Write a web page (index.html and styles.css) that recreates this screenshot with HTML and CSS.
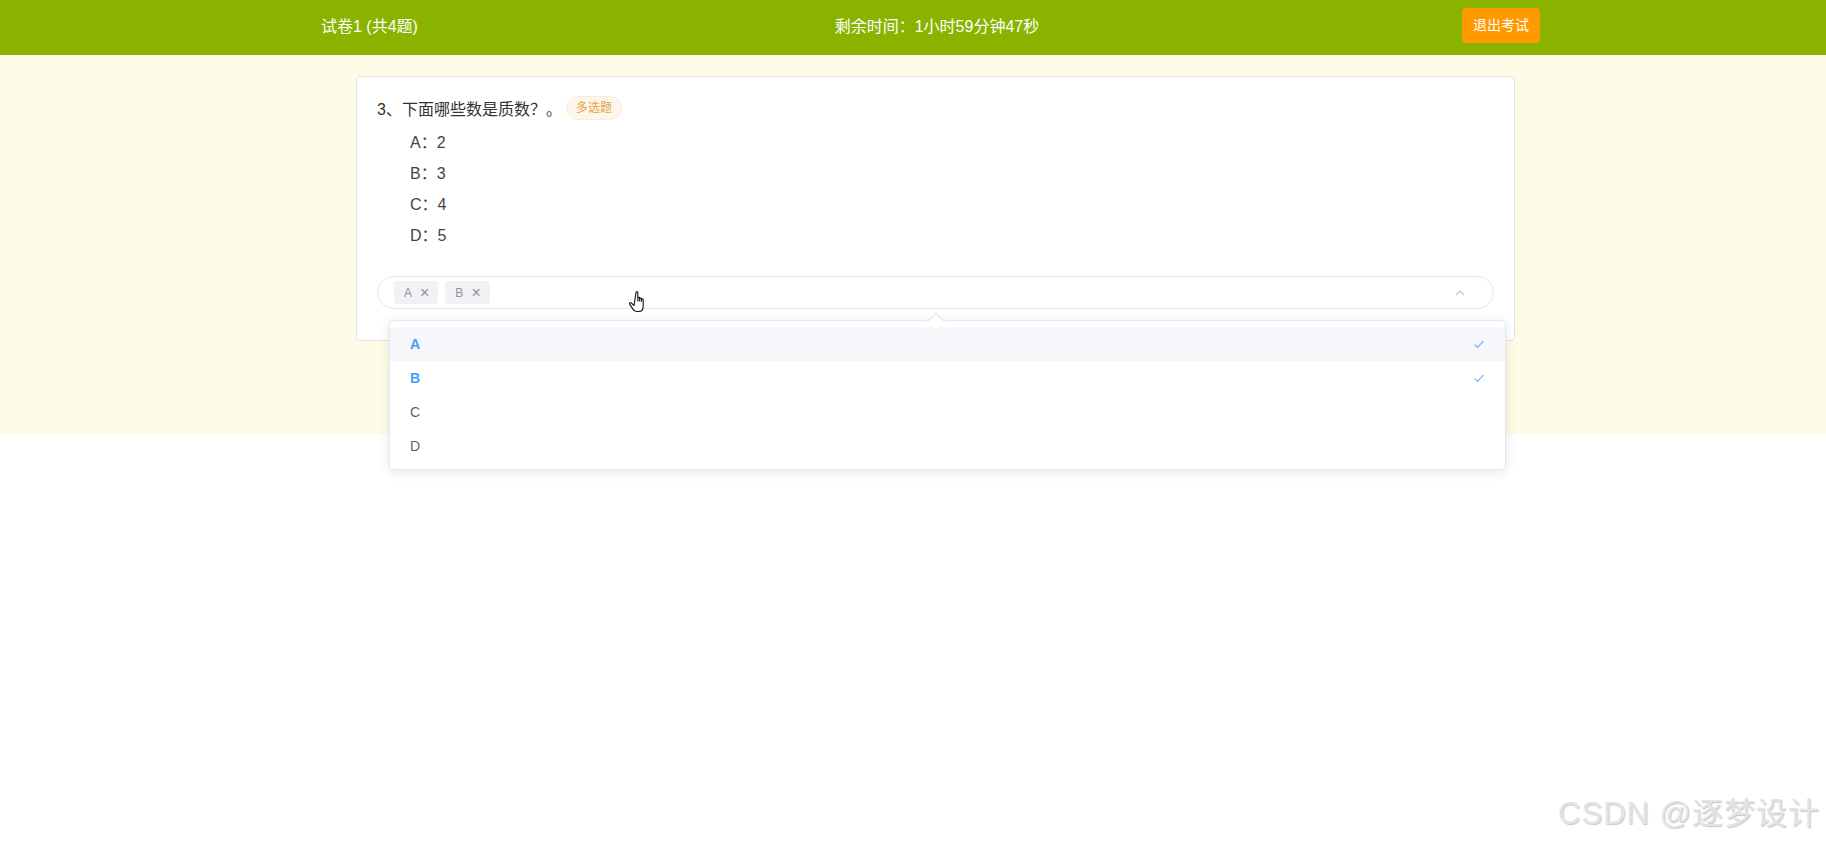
FILE: index.html
```html
<!DOCTYPE html>
<html lang="zh-CN">
<head>
    <meta charset="UTF-8">
    <meta name="viewport" content="width=device-width, initial-scale=1.0">
    <title>在线考试</title>
    <link rel="stylesheet" href="styles.css">
</head>
<body>
    <div class="header">
        <div class="header__inner">
            <div class="header__title">试卷1 (共4题)</div>
            <div class="header__timer">剩余时间：1小时59分钟47秒</div>
            <a href="#" class="btn-exit">退出考试</a>
        </div>
    </div>
    <div class="main">
        <div class="card">
            <div class="question">
                <span>3、下面哪些数是质数？。</span>
                <span class="tag-type">多选题</span>
            </div>
            <ul class="options">
                <li>A：2</li>
                <li>B：3</li>
                <li>C：4</li>
                <li>D：5</li>
            </ul>
            <div class="select">
                <div class="select__box">
                    <span class="chip">A <i class="chip__close">×</i></span>
                    <span class="chip">B <i class="chip__close">×</i></span>
                    <svg class="select__arrow" width="12" height="12" viewBox="0 0 12 12">
                        <path d="M2 8 L6 4 L10 8" fill="none" stroke="#c0c4cc" stroke-width="1.2"/>
                    </svg>
                </div>
                <div class="dropdown">
                    <div class="dropdown__arrow"></div>
                    <div class="dropdown__item is-selected is-hover">
                        <span>A</span>
                        <svg width="12" height="12" viewBox="0 0 12 12"><path d="M1.5 6.5 L4.5 9.5 L10.5 3" fill="none" stroke="#409eff" stroke-width="1.2"/></svg>
                    </div>
                    <div class="dropdown__item is-selected">
                        <span>B</span>
                        <svg width="12" height="12" viewBox="0 0 12 12"><path d="M1.5 6.5 L4.5 9.5 L10.5 3" fill="none" stroke="#409eff" stroke-width="1.2"/></svg>
                    </div>
                    <div class="dropdown__item"><span>C</span></div>
                    <div class="dropdown__item"><span>D</span></div>
                </div>
                <svg class="cursor" width="22" height="26" viewBox="0 0 22 26">
                    <path d="M7 2.5c0-1 1.8-1 1.8 0v8.5l0-3c0-1 1.8-1 1.8 0v3l0-2.2c0-1 1.8-1 1.8 0v2.5l0-1.6c0-1 1.8-1 1.8 0v6.5c0 3-1.6 5.3-4.5 5.3h-2c-1.8 0-3-1-4-2.6l-3-4.8c-.6-1 .6-2 1.5-1.2l2.8 2.6z" fill="#fff" stroke="#111" stroke-width="1.1" stroke-linejoin="round"/>
                </svg>
            </div>
        </div>
    </div>
    <div class="watermark">CSDN @逐梦设计</div>
</body>
</html>
```

FILE: styles.css
```css
* {
    box-sizing: border-box;
}
html, body {
    min-height: 100%;
}
body {
    margin: 0;
    min-height: 843px;
    position: relative;
    background: #fff;
    font-family: "Liberation Sans", "Noto Sans CJK SC", sans-serif;
    color: #333;
}
.header {
    height: 55px;
    background: #8ab300;
    color: #fff;
}
.header__inner {
    height: 100%;
    display: flex;
    align-items: center;
    justify-content: space-between;
    padding: 0 286px 5px 321px;
    font-size: 16px;
}
.header__timer {
    margin-right: 6px;
}
.btn-exit {
    display: block;
    height: 35px;
    line-height: 35px;
    padding: 0 11px;
    margin-top: 0;
    background: #ff9900;
    border-radius: 4px;
    color: #fff;
    font-size: 14px;
    text-decoration: none;
}
.main {
    min-height: 379px;
    background: #fefbe6;
    padding: 21px 311px 0 356px;
}
.card {
    position: relative;
    z-index: 2;
    background: #fff;
    border: 1px solid #e4e4e4;
    border-radius: 4px;
    padding: 19px 20px 31px;
}
.question {
    display: flex;
    align-items: center;
    height: 24px;
    font-size: 16px;
}
.tag-type {
    height: 24px;
    line-height: 22px;
    padding: 0 9px;
    margin-left: 4px;
    font-size: 12px;
    color: #e6a23c;
    background: #fdf6ec;
    border: 1px solid #faecd8;
    border-radius: 12px;
}
.options {
    list-style: none;
    margin: 7px 0 0;
    padding: 0 0 0 33px;
    font-size: 16px;
    color: #444;
}
.options li {
    height: 31px;
    line-height: 31px;
}
.select {
    position: relative;
    margin-top: 25px;
}
.select__box {
    display: flex;
    align-items: center;
    gap: 7px;
    height: 33px;
    padding: 0 12px 0 16px;
    border: 1px solid #e4e7ed;
    border-radius: 17px;
}
.chip {
    display: inline-flex;
    align-items: center;
    height: 23px;
    padding: 0 9px 0 10px;
    background: #f0f2f5;
    border-radius: 4px;
    color: #909399;
    font-size: 12px;
}
.chip__close {
    font-style: normal;
    font-size: 16px;
    line-height: 1;
    margin-left: 8px;
}
.select__arrow {
    margin-left: auto;
    margin-right: 15px;
}
.dropdown {
    position: absolute;
    z-index: 5;
    top: 44px;
    left: 12px;
    width: 100%;
    padding: 6px 0;
    background: #fff;
    border: 1px solid #e4e7ed;
    border-radius: 4px;
    box-shadow: 0 2px 12px rgba(0, 0, 0, 0.1);
}
.dropdown__arrow {
    position: absolute;
    top: -6px;
    left: 540px;
    width: 12px;
    height: 12px;
    background: #fff;
    border-left: 1px solid #e4e7ed;
    border-top: 1px solid #e4e7ed;
    transform: rotate(45deg);
}
.dropdown__item {
    display: flex;
    align-items: center;
    justify-content: space-between;
    height: 34px;
    padding: 0 20px;
    font-size: 14px;
    color: #606266;
}
.dropdown__item.is-hover {
    background: #f5f7fa;
}
.dropdown__item.is-selected {
    color: #409eff;
    font-weight: 700;
}
.dropdown__item svg {
    opacity: 0.7;
}
.cursor {
    position: absolute;
    z-index: 6;
    top: 14px;
    left: 252px;
}
.watermark {
    position: absolute;
    right: 6px;
    top: 788px;
    font-size: 31px;
    letter-spacing: 1px;
    color: #e4e4e4;
    text-shadow: 1px 1px 1px #c8c8c8;
}
```
